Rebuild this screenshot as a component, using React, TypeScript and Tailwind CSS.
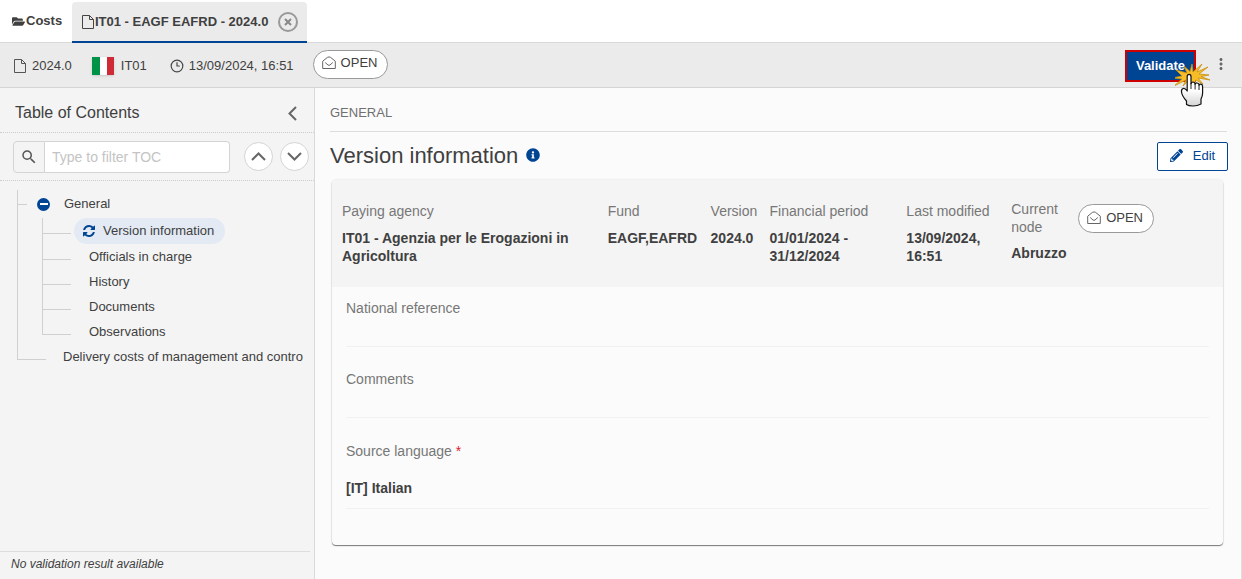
import { clsx } from 'clsx';
import { FaFolderOpen, FaInfoCircle, FaPencilAlt } from 'react-icons/fa';
import { MdSearch, MdMoreVert } from 'react-icons/md';
import { Clock3 } from 'lucide-react';

const generalItems = [
  { label: 'Version information', active: true },
  { label: 'Officials in charge' },
  { label: 'History' },
  { label: 'Documents' },
  { label: 'Observations' },
];

const summary = [
  { label: 'Paying agency', value: 'IT01 - Agenzia per le Erogazioni in Agricoltura' },
  { label: 'Fund', value: 'EAGF,EAFRD' },
  { label: 'Version', value: '2024.0' },
  { label: 'Financial period', value: '01/01/2024 - 31/12/2024' },
  { label: 'Last modified', value: '13/09/2024, 16:51' },
];

function FileIcon({ className }: { className?: string }) {
  return (
    <svg viewBox="0 0 12 14" className={className} fill="none" stroke="currentColor" aria-hidden="true">
      <path d="M.5.5h7l4 4v9H.5zM7.5.5v4h4" />
    </svg>
  );
}

function EnvelopeIcon() {
  return (
    <svg viewBox="0 0 14 14" className="h-[14px] w-[14px] text-[#666]" fill="none" stroke="currentColor" aria-hidden="true">
      <path d="M.7 5.200 5.400 1.400Q7 .4 8.600 1.400L13.300 5.200V12.500H.7zM3.200 6.500 6 9Q7 9.700 8 9L10.800 6.500" />
    </svg>
  );
}

function RefreshIcon() {
  return (
    <svg viewBox="0 0 1536 1536" className="h-3 w-3 text-[#004494]" fill="currentColor" aria-hidden="true">
      <path d="M1511 928q0 5-1 7-64 268-268 434.500t-478 166.500q-146 0-282.500-55t-243.500-157l-129 129q-19 19-45 19t-45-19-19-45v-448q0-26 19-45t45-19h448q26 0 45 19t19 45-19 45l-137 137q71 66 161 102t187 36q134 0 250-65t186-179q11-17 53-117 8-23 30-23h192q13 0 22.500 9.500t9.500 22.500zm25-800v448q0 26-19 45t-45 19h-448q-26 0-45-19t-19-45 19-45l138-138q-148-137-349-137-134 0-250 65t-186 179q-11 17-53 117-8 23-30 23h-199q-13 0-22.500-9.500t-9.500-22.500v-7q65-268 270-434.500t480-166.500q146 0 284 55.500t245 156.500l130-129q19-19 45-19t45 19 19 45z" />
    </svg>
  );
}

const chevrons = {
  left: { box: '0 0 9 15', path: 'm8 1-6.500 6.500L8 14', size: 'h-[15px] w-[9px]' },
  up: { box: '0 0 15 9', path: 'm1 8 6.500-6.500L14 8', size: 'h-[9px] w-[15px]' },
  down: { box: '0 0 15 9', path: 'm1 1 6.500 6.500L14 1', size: 'h-[9px] w-[15px]' },
};

function Chevron({ to }: { to: keyof typeof chevrons }) {
  const { box, path, size } = chevrons[to];
  return (
    <svg viewBox={box} className={size} fill="none" stroke="currentColor" strokeWidth="2" aria-hidden="true">
      <path d={path} />
    </svg>
  );
}

function FlagItaly() {
  return (
    <svg viewBox="0 0 22 18" className="h-[18px] w-[22px] shadow-sm" role="img" aria-label="Italy">
      <path fill="#009246" d="M0 0h8v18H0z" />
      <path fill="#fff" d="M8 0h7v18H8z" />
      <path fill="#ce2b37" d="M15 0h7v18h-7z" />
    </svg>
  );
}

function ClickPointer() {
  return (
    <svg viewBox="0 0 36 44" className="pointer-events-none absolute top-[13px] left-[50px] z-10 h-[44px] w-[36px]" aria-hidden="true">
      <defs>
        <linearGradient id="hand" x1="0" y1="0" x2="0" y2="1">
          <stop offset=".5" stopColor="#fff" />
          <stop offset="1" stopColor="#d4d4d4" />
        </linearGradient>
      </defs>
      <path
        d="m12 10-3-7 6 5.500L17 1l1 8 9-8-5 8 11-5-9 7 10 1-8 1.500 9 3.500-12-2 5 6-7-4-3 6-4-6-6 6 3-6-12 6 8-7-10-1 10-2L1 7z"
        fill="#f7bd28" stroke="#c8910f" strokeWidth=".8"
      />
      <path
        d="M12.200 27V13.500q0-2.200 1.900-2.200t1.900 2.200V21q.4-2 2-2 1.900 0 2.100 2.200.5-1.400 2-1.200 1.800.2 2 2.200.5-1.200 1.800-1 1.700.2 1.700 2.800v6q0 3-1.600 6v5Q22.500 43 18 43t-6.500-1.500V38q-4.500-5-5-9-.3-3 1.700-3.500 2-.3 4 2.500z"
        fill="url(#hand)" stroke="#111" strokeWidth="1.200" strokeLinejoin="round"
      />
      <path d="M16 20v6M20.100 21v5.500M24 22v5" stroke="#222" fill="none" />
    </svg>
  );
}

function StatusPill() {
  return (
    <span className="inline-flex h-[29px] items-center gap-[5px] rounded-full border border-[#999] bg-white pr-[10px] pb-[2px] pl-2 text-[13px] text-[#404040]">
      <EnvelopeIcon />
      OPEN
    </span>
  );
}

function TopTabs() {
  return (
    <nav className="flex h-[43px] items-end border-b border-[#d9d9d9] bg-white text-[13px] font-bold">
      <a href="#costs" className="flex h-10 w-[72px] items-center gap-px pb-[2px] pl-3">
        <FaFolderOpen className="h-[13px] w-[13px]" />
        Costs
      </a>
      <div className="-mb-px flex h-[41px] items-center rounded-t-sm border-b-2 border-[#004494] bg-[#ebebeb] pr-[9px] pl-[10px]">
        <a href="#it01" className="flex items-center gap-px">
          <FileIcon className="h-[14px] w-3 text-[#444]" />
          IT01 - EAGF EAFRD - 2024.0
        </a>
        <button aria-label="Close tab" className="ml-[10px] flex h-5 w-5 items-center justify-center rounded-full border-2 border-[#999] text-[#888]">
          <svg viewBox="0 0 8 8" className="h-2 w-2" stroke="currentColor" strokeWidth="2" aria-hidden="true">
            <path d="m1 1 6 6M7 1 1 7" />
          </svg>
        </button>
      </div>
    </nav>
  );
}

function InfoBar() {
  return (
    <header className="flex h-[45px] items-center border-b border-[#d5d5d5] bg-[#ebebeb] pt-[2px] pr-3 pl-[14px] text-[13px]">
      <FileIcon className="h-[14px] w-3 text-[#555]" />
      <span className="ml-[6px]">2024.0</span>
      <span className="ml-5"><FlagItaly /></span>
      <span className="ml-[7px]">IT01</span>
      <Clock3 className="ml-[23px] h-[14px] w-[14px] text-[#444]" />
      <span className="ml-[5px]">13/09/2024, 16:51</span>
      <span className="ml-[19px] flex pb-1"><StatusPill /></span>
      <div className="relative ml-auto">
        <button className="h-8 w-[71px] border-2 border-[#c00] bg-[#004494] text-[13px] font-bold text-white">Validate</button>
        <ClickPointer />
      </div>
      <button aria-label="More actions" className="ml-4 pb-1 text-[#666]">
        <MdMoreVert className="h-[18px] w-[18px]" />
      </button>
    </header>
  );
}

function Branch({ last }: { last?: boolean }) {
  return (
    <div className={clsx('border-l border-[#d0d0d0]', !last && 'self-stretch')}>
      <div className="h-4 w-7 border-b border-[#d0d0d0]" />
    </div>
  );
}

function Tree() {
  return (
    <ul className="mt-[9px] ml-[17px] text-[13px]">
      <li className="flex">
        <div className="-mr-[9px] flex border-l border-[#d0d0d0]">
          <div className="h-[15px] w-[9px] border-b border-[#d0d0d0]" />
        </div>
        <div className="min-w-0 flex-1">
          <div className="flex h-7 items-center pl-[19px]">
            <button aria-label="Collapse General" className="flex h-[13px] w-[13px] items-center justify-center rounded-full bg-[#004494]">
              <span className="h-[2px] w-2 bg-white" />
            </button>
            <a href="#general" className="ml-[14px]">General</a>
          </div>
          <ul className="ml-6">
            {generalItems.map((item, i) => (
              <li key={item.label} className={clsx('flex items-start', item.active ? 'h-[26px]' : 'h-[25px]')}>
                <Branch last={i === generalItems.length - 1} />
                {item.active ? (
                  <a href="#version" className="ml-[3px] flex h-[26px] items-center gap-2 rounded-full bg-[#e3eaf4] pr-[11px] pl-[9px]">
                    <RefreshIcon />
                    {item.label}
                  </a>
                ) : (
                  <a href="#section" className="ml-[18px] leading-[26px]">{item.label}</a>
                )}
              </li>
            ))}
          </ul>
        </div>
      </li>
      <li className="flex h-[25px] items-start">
        <Branch last />
        <a href="#delivery" className="ml-[17px] leading-[26px] whitespace-nowrap">Delivery costs of management and contro</a>
      </li>
    </ul>
  );
}

function Sidebar() {
  return (
    <aside className="flex w-[315px] shrink-0 flex-col border-r border-[#d9d9d9] bg-[#f4f4f4]">
      <div className="flex h-[45px] items-center justify-between border-b border-dotted border-[#ccc] pt-[6px] pr-[17px] pl-[15px]">
        <h2 className="text-base">Table of Contents</h2>
        <button aria-label="Collapse table of contents" className="text-[#666]">
          <Chevron to="left" />
        </button>
      </div>
      <div className="flex h-12 items-center border-b border-dotted border-[#ccc] pr-[5px] pl-[13px]">
        <label htmlFor="toc-filter" className="flex h-8 w-8 items-center justify-center rounded-l-sm border border-[#d4d4d4] text-[#555]">
          <MdSearch className="h-[18px] w-[18px]" aria-label="Filter" />
        </label>
        <input
          id="toc-filter"
          type="text"
          placeholder="Type to filter TOC"
          className="h-8 min-w-0 flex-1 rounded-r-sm border border-l-0 border-[#d4d4d4] bg-white px-[7px] text-sm placeholder:text-[#c4c4c4]"
        />
        <button aria-label="Previous" className="ml-[14px] flex h-[29px] w-[29px] items-center justify-center rounded-full border border-[#d4d4d4] bg-white text-[#666]">
          <Chevron to="up" />
        </button>
        <button aria-label="Next" className="ml-[7px] flex h-[29px] w-[29px] items-center justify-center rounded-full border border-[#d4d4d4] bg-white text-[#666]">
          <Chevron to="down" />
        </button>
      </div>
      <Tree />
      <p className="mt-auto mr-1 h-7 border-t border-[#ddd] pl-[11px] text-xs leading-6 italic">No validation result available</p>
    </aside>
  );
}

function VersionCard() {
  return (
    <section className="mt-2 mr-1 ml-[2px] flex flex-1 flex-col rounded-sm bg-[#fbfbfb] text-sm shadow-[0_1px_1px_rgba(0,0,0,0.5),0_0_2px_rgba(0,0,0,0.15)]">
      <dl className="grid h-[107px] grid-cols-[266fr_103fr_59fr_137fr_105fr_67fr_145fr] bg-[#f4f4f4] pl-[10px] leading-[18px]">
        {summary.map((item) => (
          <div key={item.label} className="pt-[22px]">
            <dt className="whitespace-nowrap text-[#777]">{item.label}</dt>
            <dd className="mt-[9px] pr-2 font-bold">{item.value}</dd>
          </div>
        ))}
        <div className="pt-5">
          <dt className="text-[#777]">Current node</dt>
          <dd className="mt-2 font-bold">Abruzzo</dd>
        </div>
        <div className="pt-6">
          <StatusPill />
        </div>
      </dl>
      <dl className="px-[14px]">
        <div className="h-[60px] border-b border-[#f1f1f1] pt-[11px]">
          <dt className="text-[#777]">National reference</dt>
        </div>
        <div className="h-[71px] border-b border-[#f1f1f1] pt-[22px]">
          <dt className="text-[#777]">Comments</dt>
        </div>
        <div className="h-[91px] border-b border-[#f1f1f1] pt-[23px]">
          <dt className="text-[#777]">Source language <span className="text-[#dc2035]">*</span></dt>
          <dd className="mt-[17px] font-bold">[IT] Italian</dd>
        </div>
      </dl>
    </section>
  );
}

export default function App() {
  return (
    <div className="flex min-h-screen flex-col bg-[#fbfbfb] font-['Liberation_Sans',Arial,sans-serif] text-[#404040]">
      <TopTabs />
      <InfoBar />
      <div className="flex flex-1">
        <Sidebar />
        <main className="flex min-w-0 flex-1 flex-col border-r border-[#ddd] pr-[14px] pb-[34px] pl-[15px]">
          <div className="flex h-11 items-center border-b border-[#ddd] pt-[6px] text-[13px] text-[#707070]">GENERAL</div>
          <div className="-mr-px flex h-10 items-end justify-between pb-px">
            <h1 className="flex items-center gap-2 self-center pt-[7px] text-[22px]">
              Version information
              <FaInfoCircle className="h-[14px] w-[14px] text-[#004494]" />
            </h1>
            <button className="flex h-[29px] w-[71px] items-center justify-center gap-[10px] rounded-xs border border-[#004494] bg-white pb-[2px] text-[13px] text-[#004494]">
              <FaPencilAlt className="h-[13px] w-[13px]" />
              Edit
            </button>
          </div>
          <VersionCard />
        </main>
      </div>
    </div>
  );
}
